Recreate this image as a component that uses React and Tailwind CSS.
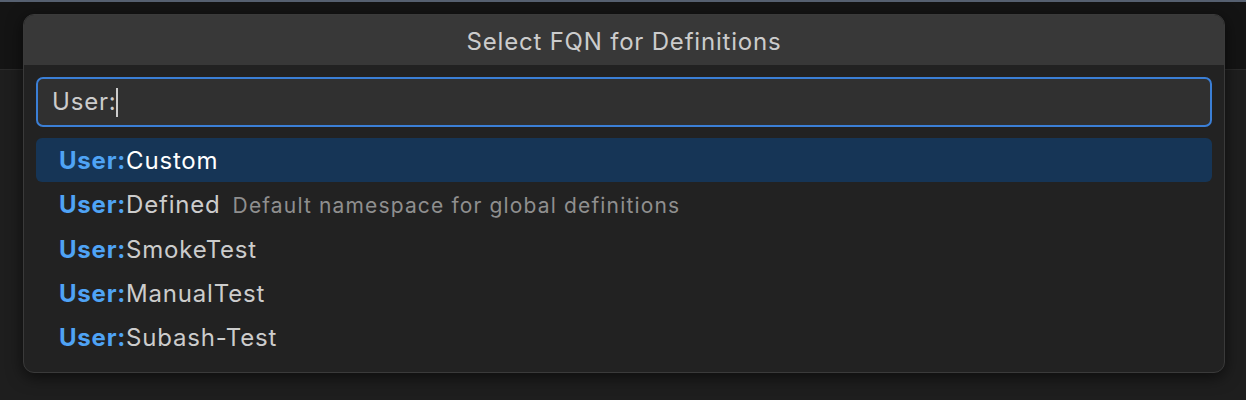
// App.jsx
//
// Quick pick "Select FQN for Definitions" en tema oscuro.

import React from 'react'

const opciones = [
  { nombre: 'Custom', activo: true },
  { nombre: 'Defined', detalle: 'Default namespace for global definitions' },
  { nombre: 'SmokeTest' },
  { nombre: 'ManualTest' },
  { nombre: 'Subash-Test' },
]

function Fila({ nombre, detalle, activo }) {
  return (
    <div
      className={
        'flex items-baseline h-[44.25px] pt-[1px] pl-[23px] rounded-[6px] leading-[43px] ' +
        (activo ? 'bg-[#163556] text-white' : 'text-[#cccccc]')
      }
    >
      <span className="font-bold text-[#4fa3f5]">User:</span>
      <span>{nombre}</span>
      {detalle && (
        <span className="ml-[12px] text-[21px] tracking-[1.15px] text-[#8f8f8f]">{detalle}</span>
      )}
    </div>
  )
}

export default function App() {
  return (
    <div
      className="relative w-[1246px] h-[400px] overflow-hidden bg-[#1e1e1e]"
      style={{ fontFamily: 'Inter, "Noto Sans", sans-serif' }}
    >
      {/* Fondo de la ventana detrás del diálogo */}
      <div className="h-[2px] bg-[#566070]" />
      <div className="h-[68px] bg-[#141414] border-b border-[#2a2a2a]" />

      {/* Diálogo */}
      <div className="absolute left-[23px] top-[14px] w-[1202px] rounded-[11px] border border-[#3a3a3a] bg-[#222222] overflow-hidden shadow-[0_4px_16px_rgba(0,0,0,0.6)]">
        <div className="h-[50px] pt-[3px] bg-[#383838] flex items-center justify-center text-[24px] tracking-[0.8px] text-[#cccccc]">
          Select FQN for Definitions
        </div>

        <div className="px-[12px] pt-[12px] pb-[13px]">
          <div className="h-[50px] rounded-[7px] border-2 border-[#3b7fd6] bg-[#303030] flex items-center pl-[14px] text-[24px] tracking-[0.8px] text-[#cccccc]">
            <span>User:</span>
            <span className="w-[1.5px] h-[29px] bg-[#cccccc]" />
          </div>

          <div className="mt-[11px] text-[24px] tracking-[0.8px]">
            {opciones.map((o) => (
              <Fila key={o.nombre} {...o} />
            ))}
          </div>
        </div>
      </div>
    </div>
  )
}
